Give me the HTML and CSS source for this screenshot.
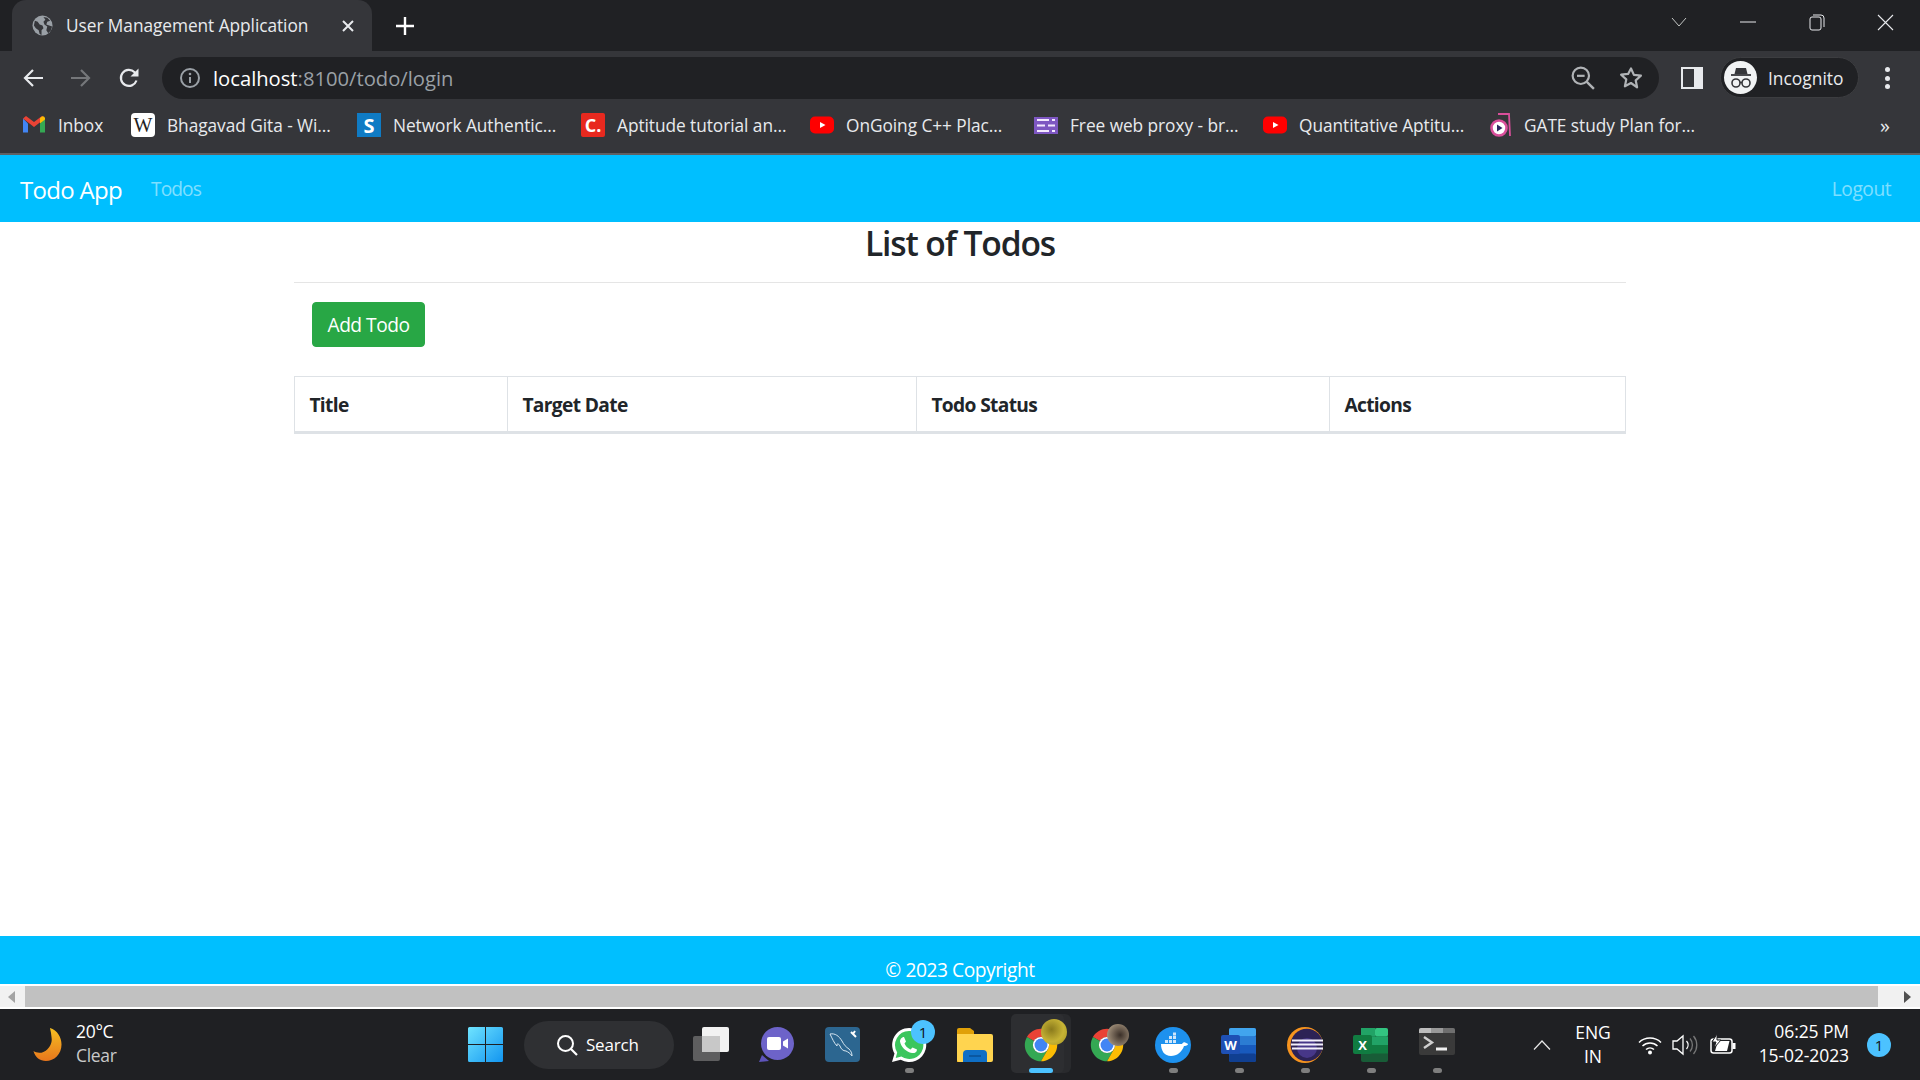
FILE: index.html
```html
<!DOCTYPE html>
<html lang="en">
<head>
  <meta charset="UTF-8" />
  <title>User Management Application</title>
  <link rel="stylesheet" href="styles.css">
</head>
<body>
  <svg class="defs" width="0" height="0">
    <symbol id="chrome" viewBox="0 0 48 48">
      <path d="M6.68 14A20 20 0 0 1 41.32 14H24A10 10 0 0 0 15.34 19Z" fill="#ea4335" transform="translate(24 24) scale(1.08) translate(-24 -24)"/>
      <path d="M6.68 14A20 20 0 0 0 24 44L32.66 29A10 10 0 0 1 15.34 19Z" fill="#34a853" transform="translate(24 24) scale(1.08) translate(-24 -24)"/>
      <path d="M41.32 14A20 20 0 0 1 24 44L32.66 29A10 10 0 0 0 24 14Z" fill="#fbbc04" transform="translate(24 24) scale(1.08) translate(-24 -24)"/>
      <circle cx="24" cy="24" r="10.8" fill="#fff"/>
      <circle cx="24" cy="24" r="8.6" fill="#4285f4"/>
    </symbol>
    <symbol id="yt" viewBox="0 0 24 24">
      <rect x="0" y="3.5" width="24" height="17" rx="5" fill="#f00"/>
      <path d="M10 9l5.5 3-5.5 3z" fill="#fff"/>
    </symbol>
  </svg>

  <div class="tabstrip">
    <div class="tab">
      <svg class="tab-icon" viewBox="0 0 22 22"><circle cx="11" cy="11" r="10.5" fill="#9aa0a6"/><path d="M3 6l3 1 2 3 3 1 1 3-2 2v5l-2-1-1-4-3-2-2-3zM12 2l4 1 3 3-3 1-1 3 3 1 3 1-1 4-3 3-2-3 1-4-3-2-1-3 2-2z" fill="#35363a"/></svg>
      <span class="tab-title">User Management Application</span>
      <svg class="tab-close" viewBox="0 0 14 14"><path d="M2 2l10 10M12 2L2 12" stroke="#e8eaed" stroke-width="2"/></svg>
    </div>
    <div class="win-btn new-tab"><svg width="20" height="20" viewBox="0 0 20 20"><path d="M10 1v18M1 10h18" stroke="#fff" stroke-width="2.4"/></svg></div>
    <div class="win-btn push"><svg width="16" height="10" viewBox="0 0 16 10"><path d="M1 1l7 8 7-8" fill="none" stroke="#c4c7c5" stroke-width="1"/></svg></div>
    <div class="win-btn"><svg width="16" height="2" viewBox="0 0 16 2"><path d="M0 1h16" stroke="#e8eaed" stroke-width="1"/></svg></div>
    <div class="win-btn"><svg width="16" height="18" viewBox="0 0 16 18"><rect x="1" y="4" width="11" height="13" rx="2" fill="none" stroke="#e8eaed"/><path d="M4 2h8a3 3 0 0 1 3 3v9" fill="none" stroke="#e8eaed"/></svg></div>
    <div class="win-btn"><svg width="17" height="17" viewBox="0 0 17 17"><path d="M1 1l15 15M16 1L1 16" stroke="#e8eaed" stroke-width="1.1"/></svg></div>
  </div>

  <div class="toolbar">
    <div class="nav-btn"><svg width="22" height="20" viewBox="0 0 22 20"><path d="M21 10H3M11 2l-8 8 8 8" fill="none" stroke="#e8eaed" stroke-width="2.2"/></svg></div>
    <div class="nav-btn"><svg width="22" height="20" viewBox="0 0 22 20"><path d="M1 10h18M11 2l8 8-8 8" fill="none" stroke="#75777a" stroke-width="2.2"/></svg></div>
    <div class="nav-btn"><svg width="22" height="22" viewBox="0 0 22 22"><path d="M18.5 13.5A8 8 0 1 1 16.6 5.3L19 8" fill="none" stroke="#e8eaed" stroke-width="2.2"/><path d="M20.5 1.5v8h-8z" fill="#e8eaed"/></svg></div>
    <div class="urlbar">
      <svg class="url-info" viewBox="0 0 22 22"><circle cx="11" cy="11" r="9" fill="none" stroke="#9aa0a6" stroke-width="2"/><path d="M11 10v6" stroke="#9aa0a6" stroke-width="2"/><circle cx="11" cy="7" r="1.3" fill="#9aa0a6"/></svg>
      <div class="url-text"><span class="url-host">localhost</span>:8100/todo/login</div>
      <svg class="url-icon" viewBox="0 0 22 22"><circle cx="9" cy="9" r="7.5" fill="none" stroke="#b0b3b6" stroke-width="2"/><path d="M14.5 14.5l6.5 6.5" stroke="#b0b3b6" stroke-width="2.2"/><path d="M5.5 9h7" stroke="#b0b3b6" stroke-width="2"/></svg>
      <svg class="url-icon" viewBox="0 0 24 24"><path d="M12 2.5l2.9 6.4 7 .8-5.2 4.7 1.4 6.9L12 17l-6.1 3.3 1.4-6.9-5.2-4.7 7-.8z" fill="none" stroke="#b0b3b6" stroke-width="2.2" stroke-linejoin="round"/></svg>
    </div>
    <div class="side-btn"><svg width="22" height="22" viewBox="0 0 22 22"><rect x="1" y="1" width="20" height="20" fill="none" stroke="#e8eaed" stroke-width="2"/><rect x="13" y="1" width="8" height="20" fill="#e8eaed"/></svg></div>
    <div class="profile">
      <div class="avatar">
        <svg width="26" height="26" viewBox="0 0 26 26"><path d="M8 3h10l1.5 6h-13z" fill="#35363a"/><path d="M3 10h20" stroke="#35363a" stroke-width="1.8"/><circle cx="8" cy="18" r="4" fill="none" stroke="#35363a" stroke-width="1.6"/><circle cx="18" cy="18" r="4" fill="none" stroke="#35363a" stroke-width="1.6"/><path d="M12 17.5h2" stroke="#35363a" stroke-width="1.4"/></svg>
      </div>
      <span class="profile-name">Incognito</span>
    </div>
    <div class="menu-btn"><span></span><span></span><span></span></div>
  </div>

  <div class="bookmarks">
    <div class="bookmark">
      <svg class="bm-icon" viewBox="0 0 24 24"><path d="M1 5.500v14h5v-9z" fill="#4285f4"/><path d="M18 10.500v9h5v-14z" fill="#34a853"/><path d="M1 5.500l11 8.500 11-8.500-3-2.500-8 6-8-6z" fill="#ea4335"/><path d="M18 5v5.500l5-4V5a2.500 2.500 0 0 0-3-1.500z" fill="#fbbc04"/></svg>
      <span>Inbox</span>
    </div>
    <div class="bookmark">
      <div class="bm-tile bm-wiki">W</div>
      <span>Bhagavad Gita - Wi...</span>
    </div>
    <div class="bookmark">
      <div class="bm-tile bm-scribd">S</div>
      <span>Network Authentic...</span>
    </div>
    <div class="bookmark">
      <div class="bm-tile bm-c">C.</div>
      <span>Aptitude tutorial an...</span>
    </div>
    <div class="bookmark">
      <svg class="bm-icon"><use href="#yt"/></svg>
      <span>OnGoing C++ Plac...</span>
    </div>
    <div class="bookmark">
      <svg class="bm-icon" viewBox="0 0 24 24"><rect x="0" y="4" width="24" height="17" fill="#7e57c2"/><path d="M3 7h12M18 7h3M3 12.500h8M14 12.500h7M3 18h12M18 18h3" stroke="#f3e9ff" stroke-width="2"/></svg>
      <span>Free web proxy - br...</span>
    </div>
    <div class="bookmark">
      <svg class="bm-icon"><use href="#yt"/></svg>
      <span>Quantitative Aptitu...</span>
    </div>
    <div class="bookmark">
      <svg class="bm-icon bm-gate" viewBox="0 0 22 26"><path d="M8 2h11l1 22" fill="none" stroke="#d94f9b" stroke-width="1.8"/><circle cx="9" cy="16" r="7.5" fill="#fff" stroke="#d94f9b" stroke-width="2.6"/><path d="M7 12.500l5.500 3.500L7 19.500z" fill="#2b2560"/></svg>
      <span>GATE study Plan for...</span>
    </div>
    <div class="bm-more">»</div>
  </div>

  <nav class="navbar">
    <a class="brand">Todo App</a>
    <a class="nav-link">Todos</a>
    <a class="nav-link logout">Logout</a>
  </nav>

  <main class="content">
    <div class="container">
      <h3 class="page-title">List of Todos</h3>
      <hr class="rule" />
      <button class="btn-add">Add Todo</button>
      <table class="todo-table">
        <colgroup>
          <col class="col-title" />
          <col class="col-date" />
          <col class="col-status" />
          <col class="col-actions" />
        </colgroup>
        <thead>
          <tr>
            <th>Title</th>
            <th>Target Date</th>
            <th>Todo Status</th>
            <th>Actions</th>
          </tr>
        </thead>
      </table>
    </div>
  </main>

  <footer class="footer">© 2023 Copyright</footer>

  <div class="scrollbar">
    <div class="scroll-btn scroll-left"></div>
    <div class="scroll-thumb"></div>
    <div class="scroll-btn scroll-right"></div>
  </div>

  <div class="taskbar">
    <div class="weather">
      <svg class="moon" viewBox="0 0 34 40"><defs><linearGradient id="moonfill" x1="0" y1="0" x2="0" y2="1"><stop offset="0" stop-color="#f6c022"/><stop offset="1" stop-color="#e8761c"/></linearGradient></defs><path d="M20 0c9 3 14 11 14 20 0 12-9 20-19 20C8 40 2 36 0 28c3 2 8 3 12 1 7-3 11-11 10-17-.3-4-1-8-2-12z" fill="url(#moonfill)"/></svg>
      <div class="weather-text">
        <div>20°C</div>
        <div class="weather-sub">Clear</div>
      </div>
    </div>
    <svg class="win-logo" viewBox="0 0 35 35"><defs><linearGradient id="winfill" x1="0" y1="0" x2="1" y2="1"><stop offset="0" stop-color="#6fe4ff"/><stop offset="1" stop-color="#1295f0"/></linearGradient></defs><path d="M0 1.500A1.500 1.500 0 0 1 1.500 0H17v17H0zM18 0h15.500A1.500 1.500 0 0 1 35 1.500V17H18zM0 18h17v17H1.500A1.500 1.500 0 0 1 0 33.500zM18 18h17v15.500a1.500 1.500 0 0 1-1.500 1.500H18z" fill="url(#winfill)"/></svg>
    <div class="search-pill">
      <svg width="24" height="24" viewBox="0 0 24 24"><circle cx="10.5" cy="10.5" r="7.5" fill="none" stroke="#fff" stroke-width="2"/><path d="M16 16l6 6" stroke="#fff" stroke-width="2.2"/></svg>
      <span>Search</span>
    </div>
    <div class="apps">
      <div class="app">
        <svg viewBox="0 0 36 36"><rect x="9" y="0" width="27" height="25" rx="2" fill="#f2f2f2"/><rect x="0" y="9" width="27" height="25" rx="2" fill="#6a6a6a" fill-opacity=".85"/><rect x="9" y="9" width="18" height="16" fill="#c8c8c8"/></svg>
      </div>
      <div class="app">
        <svg viewBox="0 0 36 36"><circle cx="18.5" cy="16.5" r="16.5" fill="#6d63c9"/><path d="M3 28l-3 7 10-1z" fill="#5e54bb"/><rect x="8" y="10" width="14" height="13" rx="2" fill="#fff"/><path d="M24 14.5l5-3v10l-5-3z" fill="#fff"/></svg>
      </div>
      <div class="app">
        <svg viewBox="0 0 36 36"><rect width="35" height="35" rx="4" fill="#2c6690"/><path d="M5 7c5-1 9 2 12 7 2 4 4 6 7 8 2 2 3 4 3 7-2-3-4-4-6-5-3 0-5-2-6-5-2-3-3-3-3 0-3-3-5-8-7-12z" fill="none" stroke="#d7e6f1" stroke-width="1"/><path d="M26 5l5 5M30 4l-2 3" stroke="#fff" stroke-width="2"/></svg>
      </div>
      <div class="app">
        <svg viewBox="0 0 36 36"><path d="M18 1a17 17 0 0 0-14.500 25.600L1 35l8.700-2.300A17 17 0 1 0 18 1z" fill="#fff"/><path d="M18 4a14 14 0 0 0-11.800 21.400L4.700 31l5.700-1.500A14 14 0 1 0 18 4z" fill="#3bc65d"/><path d="M13 10l2 4.500-1.500 2c1 2.500 3 4.500 6 6l2-2 4.500 2c0 3-3 4-5 3.500-6-1-11-6-12-11.500 0-2 1.500-4.500 4-4.500z" fill="#fff"/></svg>
        <span class="app-badge">1</span>
        <span class="app-dot"></span>
      </div>
      <div class="app">
        <svg viewBox="0 0 36 34"><path d="M0 2a2 2 0 0 1 2-2h11l4 3v31H0z" fill="#e0a008"/><path d="M0 6h34a2 2 0 0 1 2 2v24a2 2 0 0 1-2 2H2a2 2 0 0 1-2-2z" fill="#ffd44f"/><path d="M6 34V26a4 4 0 0 1 4-4h16a4 4 0 0 1 4 4v8z" fill="#0f6fc6"/><path d="M12 28h12" stroke="#0a4f94" stroke-width="1.5"/></svg>
      </div>
      <div class="app app-active">
        <span class="app-stack"></span>
        <span class="app-bg"></span>
        <svg><use href="#chrome"/></svg>
        <span class="profile-dot dot-yellow"></span>
        <span class="app-line"></span>
      </div>
      <div class="app">
        <svg><use href="#chrome"/></svg>
        <span class="profile-dot dot-brown"></span>
      </div>
      <div class="app">
        <svg viewBox="0 0 36 36"><circle cx="18" cy="18" r="18" fill="#1d91ee"/><path d="M6 17h21c1-2 3-2.500 4-1 1 .5 2 .5 2 1.500-1 1-3 1.500-4 1.500-2 6-7 10-13 10-6.500 0-10-5-10-12z" fill="#fff"/><path d="M10 13h3v3h-3zM14 13h3v3h-3zM18 13h3v3h-3zM14 9h3v3h-3zM18 9h3v3h-3zM18 5.500h3v3h-3z" fill="#cfe6fa"/></svg>
        <span class="app-dot"></span>
      </div>
      <div class="app">
        <svg viewBox="0 0 36 34"><rect x="8" y="0" width="27" height="34" rx="2" fill="#185abd"/><rect x="8" y="0" width="27" height="8.500" rx="2" fill="#41a5ee"/><rect x="8" y="8.500" width="27" height="8.500" fill="#2b7cd3"/><rect x="8" y="25.500" width="27" height="8.500" rx="2" fill="#103f91"/><rect x="0" y="7" width="19" height="19" rx="2" fill="#1e50b4"/><text x="9.5" y="22" class="tile-letter">W</text></svg>
        <span class="app-dot"></span>
      </div>
      <div class="app">
        <svg viewBox="0 0 36 36"><circle cx="18" cy="18" r="18" fill="#f7941e"/><circle cx="19.8" cy="18" r="16.2" fill="#2c2255"/><circle cx="20" cy="21" r="10" fill="#473788"/><path d="M5 13.5h31M4 17.5h32M5 21.5h31" stroke="#f4f1fb" stroke-width="1.8"/></svg>
        <span class="app-dot"></span>
      </div>
      <div class="app">
        <svg viewBox="0 0 36 34"><rect x="8" y="0" width="27" height="34" rx="2" fill="#185c37"/><rect x="8" y="0" width="14" height="8.500" fill="#21a366"/><rect x="22" y="0" width="13" height="8.500" rx="2" fill="#33c481"/><rect x="8" y="8.500" width="27" height="8.500" fill="#21a366"/><rect x="8" y="17" width="27" height="8.500" fill="#107c41"/><rect x="0" y="7" width="19" height="19" rx="2" fill="#107c41"/><text x="9.5" y="22" class="tile-letter">X</text></svg>
        <span class="app-dot"></span>
      </div>
      <div class="app">
        <svg viewBox="0 0 36 34"><rect width="36" height="27" y="0" rx="2" fill="#3a3a3a"/><path d="M0 2a2 2 0 0 1 2-2h10v5H0z" fill="#bdbdbd"/><rect x="12" y="0" width="12" height="5" fill="#999"/><path d="M24 0h10a2 2 0 0 1 2 2v3H24z" fill="#6f6f6f"/><path d="M5 9l8 5.500L5 20" fill="none" stroke="#cfcfcf" stroke-width="2.4"/><path d="M17 21h11" stroke="#f0f0f0" stroke-width="3"/></svg>
        <span class="app-dot"></span>
      </div>
    </div>
    <div class="tray">
      <svg class="tray-chevron" width="18" height="10" viewBox="0 0 18 10"><path d="M1 9.500L9 1l8 8.500" fill="none" stroke="#e8e8e8" stroke-width="1.2"/></svg>
      <div class="lang"><div>ENG</div><div>IN</div></div>
      <svg class="tray-wifi" width="24" height="20" viewBox="0 0 24 20"><path d="M1 7.500a16 16 0 0 1 22 0M4.500 11a11 11 0 0 1 15 0M8 14.500a6 6 0 0 1 8 0" fill="none" stroke="#fff" stroke-width="1.5"/><circle cx="12" cy="17.5" r="2" fill="#fff"/></svg>
      <svg class="tray-vol" width="26" height="22" viewBox="0 0 26 22"><path d="M1 7h4l6-5v18l-6-5H1z" fill="none" stroke="#fff" stroke-width="1.3"/><path d="M14.5 7a6 6 0 0 1 0 8" fill="none" stroke="#fff" stroke-width="1.3"/><path d="M18 4.500a10 10 0 0 1 0 13M21.500 2a14 14 0 0 1 0 18" fill="none" stroke="#777" stroke-width="1.3"/></svg>
      <svg class="tray-batt" width="26" height="22" viewBox="0 0 26 22"><rect x="1" y="5" width="21" height="14" rx="2.5" fill="none" stroke="#fff" stroke-width="1.5"/><path d="M5 17h12l2.500-10H8z" fill="#fff"/><rect x="22.5" y="9" width="3" height="6" fill="#fff"/><path d="M7 0L2 8h4l-2 6 7-8H7z" fill="#fff" stroke="#202124"/></svg>
      <div class="clock"><div>06:25 PM</div><div>15-02-2023</div></div>
      <span class="notify">1</span>
    </div>
  </div>
</body>
</html>
```
FILE: styles.css
```css
* {
  box-sizing: border-box;
}
html, body {
  margin: 0;
  height: 1080px;
  overflow: hidden;
}
body {
  font-family: 'Open Sans', 'Noto Sans', sans-serif;
  display: flex;
  flex-direction: column;
  background: #ffffff;
  color: #212529;
}
.defs {
  position: absolute;
}

/* browser chrome */
.tabstrip {
  height: 51px;
  flex: none;
  display: flex;
  background: #202124;
  color: #e8eaed;
}
.tab {
  width: 360px;
  margin-left: 12px;
  padding: 0 16px 0 20px;
  display: flex;
  align-items: center;
  background: #35363a;
  border-radius: 14px 14px 0 0;
}
.tab-icon {
  width: 21px;
  height: 21px;
  flex: none;
}
.tab-title {
  margin-left: 13px;
  flex: 1;
  font-size: 17.3px;
  letter-spacing: -0.05px;
  white-space: nowrap;
}
.tab-close {
  width: 14px;
  height: 14px;
  flex: none;
  margin-right: 1px;
}
.win-btn {
  width: 69px;
  height: 44px;
  display: flex;
  align-items: center;
  justify-content: center;
}
.new-tab {
  width: 66px;
  height: 51px;
}
.push {
  margin-left: auto;
}
.toolbar {
  height: 48px;
  flex: none;
  padding: 6px 5px 0 9px;
  display: flex;
  background: #35363a;
}
.nav-btn {
  width: 48px;
  display: flex;
  align-items: center;
  justify-content: center;
}
.urlbar {
  flex: 1;
  margin-left: 9px;
  padding: 0 16px 0 17px;
  display: flex;
  align-items: center;
  background: #202124;
  border-radius: 21px;
}
.url-info {
  width: 22px;
  height: 22px;
  flex: none;
}
.url-text {
  margin-left: 12px;
  flex: 1;
  font-size: 20.2px;
  letter-spacing: 0;
  color: #9aa0a6;
}
.url-host {
  color: #ffffff;
}
.url-icon {
  width: 24px;
  height: 24px;
  margin-left: 24px;
  flex: none;
}
.side-btn {
  width: 42px;
  margin-left: 12px;
  display: flex;
  align-items: center;
  justify-content: center;
}
.profile {
  width: 139px;
  margin-left: 7px;
  height: 41px;
  padding-left: 3px;
  display: flex;
  align-items: center;
  background: #202124;
  border: 1px solid #3c3d40;
  border-radius: 21px;
}
.avatar {
  width: 33px;
  height: 33px;
  display: flex;
  align-items: center;
  justify-content: center;
  background: #f1f3f4;
  border-radius: 50%;
}
.profile-name {
  margin-left: 11px;
  font-size: 17.4px;
  letter-spacing: 0;
  color: #e8eaed;
}
.menu-btn {
  width: 56px;
  display: flex;
  flex-direction: column;
  align-items: center;
  justify-content: center;
  gap: 3.5px;
}
.menu-btn span {
  width: 5px;
  height: 5px;
  background: #e8eaed;
  border-radius: 50%;
}
.bookmarks {
  height: 56px;
  flex: none;
  padding: 0 0 2px 22px;
  display: grid;
  grid-template-columns: 109px 226px 224px 229px 224px 229px 227px 1fr 50px;
  align-items: center;
  background: #35363a;
  border-bottom: 2px solid #5f6063;
  color: #e8eaed;
  font-size: 17.3px;
  letter-spacing: -0.05px;
}
.bookmark {
  display: flex;
  align-items: center;
  gap: 12px;
  white-space: nowrap;
}
.bm-icon {
  width: 24px;
  height: 24px;
  flex: none;
}
.bm-gate {
  width: 22px;
  height: 26px;
}
.bm-tile {
  width: 24px;
  height: 24px;
  flex: none;
  display: flex;
  align-items: center;
  justify-content: center;
  font-weight: 700;
  letter-spacing: 0;
}
.bm-wiki {
  background: #ffffff;
  border-radius: 4px;
  color: #222222;
  font-family: 'Liberation Serif', serif;
  font-size: 20px;
  font-weight: 400;
}
.bm-scribd {
  background: #0f7bc4;
  color: #ffffff;
  font-size: 20px;
}
.bm-c {
  background: #e8291f;
  border-radius: 2px;
  color: #ffffff;
  font-size: 18px;
}
.bm-more {
  font-size: 20px;
  color: #e8eaed;
  text-align: center;
  padding-right: 20px;
}

/* page */
.navbar {
  height: 67px;
  flex: none;
  padding: 2px 29px 0 20px;
  display: flex;
  align-items: center;
  background: #00bfff;
}
.brand {
  font-size: 24px;
  letter-spacing: -0.7px;
  color: #ffffff;
}
.nav-link {
  margin-left: 29px;
  margin-bottom: 3px;
  font-size: 19.2px;
  letter-spacing: -0.9px;
  color: rgba(255, 255, 255, 0.5);
}
.logout {
  margin-left: auto;
  letter-spacing: -0.5px;
}
.content {
  flex: 1;
}
.container {
  width: 1332px;
  margin: 0 auto;
}
.page-title {
  margin: 0;
  padding-top: 1px;
  font-size: 33.6px;
  font-weight: 600;
  line-height: 40px;
  letter-spacing: -1.1px;
  text-align: center;
}
.rule {
  margin: 19px 0;
  border: 0;
  border-top: 1px solid rgba(0, 0, 0, 0.1);
}
.btn-add {
  display: block;
  height: 45px;
  width: 113px;
  margin: 0 0 29px 18px;
  padding: 0;
  font: inherit;
  font-size: 19.2px;
  letter-spacing: -0.5px;
  color: #ffffff;
  background: #28a745;
  border: 1px solid #28a745;
  border-radius: 4px;
}
.todo-table {
  width: 1331px;
  table-layout: fixed;
  border-collapse: collapse;
}
.col-title { width: 213px; }
.col-date { width: 409px; }
.col-status { width: 413px; }
.col-actions { width: 296px; }
.todo-table th {
  height: 56px;
  padding: 1px 14.4px 0;
  font-size: 19.2px;
  font-weight: 700;
  letter-spacing: -0.65px;
  text-align: left;
  border: 1px solid #dee2e6;
  border-bottom: 3px solid #dee2e6;
}
.footer {
  height: 48px;
  flex: none;
  padding-top: 21px;
  font-size: 19.2px;
  line-height: 26px;
  letter-spacing: -0.45px;
  text-align: center;
  color: #ffffff;
  background: #00bfff;
}

/* scrollbar */
.scrollbar {
  height: 25px;
  flex: none;
  display: flex;
  padding: 2px 0;
  background: #ffffff;
}
.scroll-btn {
  display: flex;
  align-items: center;
  background: #f1f1f1;
}
.scroll-left {
  width: 25px;
  padding-left: 8px;
}
.scroll-left::before {
  content: "";
  border: 6px solid transparent;
  border-right: 7px solid #a3a3a3;
  border-left: 0;
}
.scroll-right {
  width: 42px;
  padding-left: 26px;
}
.scroll-right::before {
  content: "";
  border: 6px solid transparent;
  border-left: 7px solid #505050;
  border-right: 0;
}
.scroll-thumb {
  flex: 1;
  background: #c1c1c1;
}

/* taskbar */
.taskbar {
  height: 71px;
  flex: none;
  display: flex;
  align-items: center;
  background: #1f2023;
  color: #ffffff;
}
.weather {
  width: 468px;
  padding-left: 31px;
  display: flex;
  align-items: center;
}
.moon {
  width: 33px;
  height: 33px;
  flex: none;
}
.weather-text {
  margin-left: 12px;
  padding-bottom: 3px;
  font-size: 17.5px;
  line-height: 24px;
  letter-spacing: -0.3px;
}
.weather-sub {
  color: #c9c9c9;
}
.win-logo {
  width: 35px;
  height: 35px;
  flex: none;
}
.search-pill {
  width: 150px;
  height: 48px;
  margin-left: 21px;
  padding-left: 31px;
  display: flex;
  align-items: center;
  gap: 7px;
  background: #2f3033;
  border-radius: 24px;
  font-size: 17px;
  letter-spacing: -0.2px;
}
.apps {
  margin-left: 4px;
  display: flex;
}
.app {
  position: relative;
  width: 66px;
  height: 70px;
  display: flex;
  align-items: center;
  justify-content: center;
}
.app svg {
  position: relative;
  width: 36px;
  height: 36px;
}
.tile-letter {
  font-family: 'Open Sans', sans-serif;
  font-size: 13px;
  font-weight: 700;
  fill: #ffffff;
  text-anchor: middle;
}
.app-dot {
  position: absolute;
  left: 29px;
  bottom: 7px;
  width: 9px;
  height: 5px;
  background: #7e7e7e;
  border-radius: 3px;
}
.app-badge {
  position: absolute;
  left: 35px;
  top: 10px;
  width: 24px;
  height: 24px;
  font-size: 15px;
  line-height: 24px;
  text-align: center;
  color: #111111;
  background: #4cc2ff;
  border-radius: 50%;
}
.app-bg {
  position: absolute;
  left: 3px;
  top: 4px;
  width: 53px;
  height: 59px;
  background: #2d2e31;
  border-radius: 5px;
}
.app-stack {
  position: absolute;
  left: 11px;
  top: 4px;
  width: 52px;
  height: 59px;
  background: #292a2d;
  border-radius: 6px;
}
.app-line {
  position: absolute;
  left: 21px;
  bottom: 7px;
  width: 24px;
  height: 5px;
  background: #4cc2ff;
  border-radius: 3px;
}
.profile-dot {
  position: absolute;
  width: 26px;
  height: 26px;
  border-radius: 50%;
}
.dot-yellow {
  left: 33px;
  top: 9px;
  background: radial-gradient(circle at 40% 40%, #8a7a1c, #c6b335 55%, #a59623);
}
.dot-brown {
  left: 33px;
  top: 14px;
  width: 22px;
  height: 22px;
  background: radial-gradient(circle at 60% 50%, #3a2f28, #8a7a68 60%, #c8b89a);
}
.tray {
  flex: 1;
  display: flex;
  align-items: center;
  font-size: 17.5px;
  letter-spacing: -0.1px;
}
.tray-chevron {
  margin-left: 63px;
}
.lang {
  width: 46px;
  margin-left: 19px;
  padding-bottom: 1px;
  line-height: 24px;
  text-align: center;
}
.tray-wifi {
  margin-left: 22px;
}
.tray-vol {
  margin-left: 10px;
}
.tray-batt {
  margin-left: 12px;
}
.clock {
  width: 110px;
  margin-left: 3px;
  padding-bottom: 3px;
  line-height: 24px;
  text-align: right;
}
.notify {
  width: 24px;
  height: 24px;
  margin-left: 18px;
  font-size: 15px;
  line-height: 24px;
  text-align: center;
  color: #111111;
  background: #4cc2ff;
  border-radius: 50%;
}
```
